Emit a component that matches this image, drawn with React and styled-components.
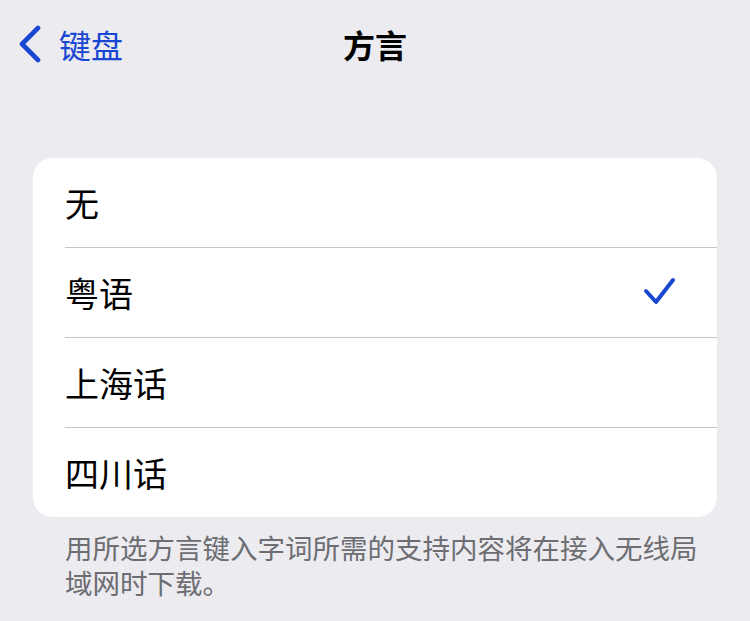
import React from 'react';
import styled, { createGlobalStyle } from 'styled-components';

const GlobalStyle = createGlobalStyle`
  html, body {
    margin: 0;
    padding: 0;
    background: #ebebf0;
  }
  body {
    font-family: "Noto Sans CJK SC", "Noto Sans", sans-serif;
    -webkit-font-smoothing: antialiased;
  }
`;

const Page = styled.div`
  width: 750px;
  height: 621px;
  background: #ebebf0;
  overflow: hidden;
`;

const NavBar = styled.div`
  position: relative;
  height: 88px;
  display: flex;
  align-items: center;
  justify-content: center;
`;

const BackButton = styled.div`
  position: absolute;
  left: 17px;
  top: 0;
  height: 88px;
  display: flex;
  align-items: center;
  gap: 16px;
  color: #1847d2;
  font-size: 32px;
`;

const Title = styled.h1`
  margin: 0;
  font-size: 32px;
  font-weight: 700;
  color: #000;
`;

const Card = styled.div`
  margin: 70px 33px 0 33px;
  background: #fff;
  border-radius: 20px;
  overflow: hidden;
`;

const Row = styled.div`
  height: 89px;
  margin-left: 32px;
  padding-right: 40px;
  display: flex;
  align-items: center;
  justify-content: space-between;
  border-bottom: ${p => (p.$last ? 'none' : '1px solid #c6c6c8')};
  font-size: 34px;
  color: #000;
`;

const Footer = styled.p`
  margin: 13px 33px 0 65px;
  font-size: 27.5px;
  line-height: 35px;
  color: #6d6d72;
`;

const Chevron = () => (
  <svg width="26" height="38" viewBox="0 0 26 38">
    <path d="M21 3 L5 19 L21 35" fill="none" stroke="#1847d2" strokeWidth="4.6" strokeLinecap="round" strokeLinejoin="round" />
  </svg>
);

const Check = () => (
  <svg width="34" height="32" viewBox="0 0 34 32">
    <path d="M3 14 L13 25 L30 3" fill="none" stroke="#1847d2" strokeWidth="4" strokeLinecap="round" strokeLinejoin="round" />
  </svg>
);

const options = ['无', '粤语', '上海话', '四川话'];

export default function App() {
  return (
    <Page>
      <GlobalStyle />
      <NavBar>
        <BackButton>
          <Chevron />
          <span>键盘</span>
        </BackButton>
        <Title>方言</Title>
      </NavBar>
      <Card>
        {options.map((o, i) => (
          <Row key={o} $last={i === options.length - 1}>
            <span>{o}</span>
            {o === '粤语' && <Check />}
          </Row>
        ))}
      </Card>
      <Footer>用所选方言键入字词所需的支持内容将在接入无线局域网时下载。</Footer>
    </Page>
  );
}
